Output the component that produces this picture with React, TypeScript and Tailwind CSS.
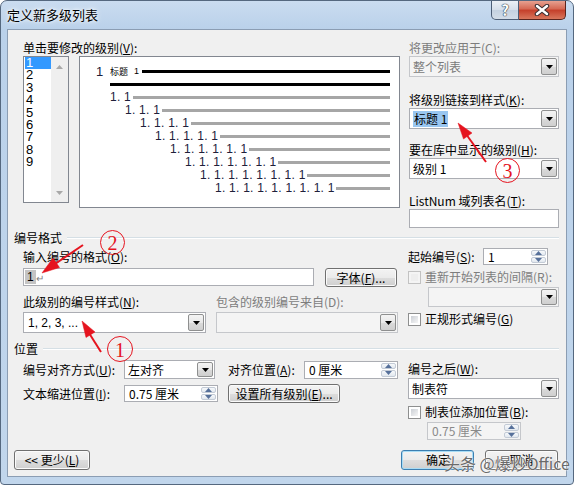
import React from 'react';

type P = { className?: string; children?: React.ReactNode; disabled?: boolean };

function U({ children }: { children: React.ReactNode }) {
  return <span className="underline underline-offset-[1px] decoration-[1px]">{children}</span>;
}

function Tri() {
  return (
    <svg width="7" height="4" viewBox="0 0 7 4">
      <path d="M0 0H7L3.5 4Z" fill="#000" />
    </svg>
  );
}

function DropBtn() {
  return (
    <div className="w-[16px] my-[1px] mr-[1px] flex items-center justify-center border border-[#8e8f8f] rounded-[2px] bg-[linear-gradient(180deg,#f4f4f4,#e8e8e8_50%,#dadada_51%,#cfcfcf)]">
      <Tri />
    </div>
  );
}

function Combo({ className = '', children, disabled }: P) {
  return (
    <div
      className={`flex border ${
        disabled ? 'border-[#c5c7cb] bg-[#f4f4f4] text-[#7a7a7a]' : 'border-[#abadb3] bg-white text-black'
      } ${className}`}
    >
      <div className="flex-1 flex items-center pl-[3px] whitespace-nowrap overflow-hidden text-[12px] leading-[16px]">
        {children}
      </div>
      <DropBtn />
    </div>
  );
}

function SpinArrow({ up }: { up?: boolean }) {
  return (
    <svg width="7" height="4" viewBox="0 0 7 4">
      <path d={up ? 'M0 4H7L3.5 0Z' : 'M0 0H7L3.5 4Z'} fill="#56709a" />
    </svg>
  );
}

function Spin({ className = '', children, disabled }: P) {
  return (
    <div
      className={`flex border ${
        disabled ? 'border-[#c5c7cb] bg-[#f4f4f4] text-[#8a8a8a]' : 'border-[#abadb3] bg-white text-black'
      } ${className}`}
    >
      <div className="flex-1 flex items-center pl-[4px] whitespace-nowrap overflow-hidden text-[12px] leading-[16px]">
        {children}
      </div>
      <div className="w-[15px] flex flex-col my-[1px] mr-[1px] gap-[1px]">
        <div className="flex-1 flex items-center justify-center border border-[#c3cbd6] rounded-[2px] bg-[linear-gradient(180deg,#f7f9fb,#e2e8ef)]">
          <SpinArrow up />
        </div>
        <div className="flex-1 flex items-center justify-center border border-[#c3cbd6] rounded-[2px] bg-[linear-gradient(180deg,#f7f9fb,#e2e8ef)]">
          <SpinArrow />
        </div>
      </div>
    </div>
  );
}

function Btn({ className = '', children, def }: P & { def?: boolean }) {
  return (
    <div
      className={`flex items-center justify-center rounded-[3px] border ${
        def ? 'border-[#3c7fb1] shadow-[inset_0_0_0_1px_#a8dcf5]' : 'border-[#707070] shadow-[inset_0_0_0_1px_#fbfbfb]'
      } bg-[linear-gradient(180deg,#f3f3f3,#ebebeb_50%,#dddddd_51%,#cfcfcf)] text-[12px] leading-[16px] whitespace-nowrap ${className}`}
    >
      {children}
    </div>
  );
}

function Check({ disabled }: { disabled?: boolean }) {
  return (
    <div
      className={`w-[13px] h-[13px] shrink-0 border p-[2px] ${
        disabled ? 'border-[#c2c2c2] bg-[#f4f4f4]' : 'border-[#8e8f8f] bg-white'
      }`}
    >
      <div
        className={`w-full h-full ${
          disabled ? 'bg-[#eeeeee]' : 'bg-[linear-gradient(135deg,#cbcfd5,#f6f6f6)]'
        }`}
      />
    </div>
  );
}

function Label({ className = '', children, disabled }: P) {
  return (
    <div
      className={`h-[16px] text-[12px] leading-[16px] whitespace-nowrap ${
        disabled ? 'text-[#7d7d7d]' : 'text-black'
      } ${className}`}
    >
      {children}
    </div>
  );
}

function ScrollArrow({ up }: { up?: boolean }) {
  return (
    <svg width="7" height="4" viewBox="0 0 7 4">
      <path d={up ? 'M0 4H7L3.5 0Z' : 'M0 0H7L3.5 4Z'} fill="#a8a8a8" />
    </svg>
  );
}

function Circled({ className, n }: { className: string; n: string }) {
  return (
    <div
      className={`absolute rounded-full border-[1.5px] border-[#e5141f] flex items-center justify-center text-[#e5141f] font-['Liberation_Serif',serif] text-[20px] leading-none ${className}`}
    >
      <span className="mt-[1px]">{n}</span>
    </div>
  );
}

export default function App() {
  const levels = [2, 3, 4, 5, 6, 7, 8, 9];
  const items = ['1', '2', '3', '4', '5', '6', '7', '8', '9'];
  return (
    <div className="w-[574px] h-[485px] relative overflow-hidden border border-[#55687f] rounded-t-[7px] rounded-b-[4px] bg-[linear-gradient(180deg,#cadcf0_0px,#bad1ea_28px,#c1d6ec_100%)] font-['Noto_Sans_CJK_SC',sans-serif] text-black text-[12px] leading-[16px]">
      {/* Title bar */}
      <div className="h-[28px] flex items-start">
        <div className="pl-[6px] pt-[5px] text-[13px] leading-[18px] [text-shadow:0_0_6px_#ffffff,0_0_3px_#ffffff]">
          定义新多级列表
        </div>
        <div className="ml-auto mr-[7px] mt-[-1px] flex">
          <div className="w-[28px] h-[20px] border border-[#4c5e76] border-t-0 rounded-bl-[5px] bg-[linear-gradient(180deg,#eef2f7,#d6dfea_50%,#c3d1e0_51%,#d3dde8)] flex items-center justify-center text-[15px] font-bold leading-none text-white [text-shadow:0_0_1px_#2e3a48,0_0_1px_#2e3a48,0_0_1px_#2e3a48]">
            ?
          </div>
          <div className="w-[47px] h-[20px] border border-[#5a241d] border-t-0 border-l-0 rounded-br-[5px] bg-[linear-gradient(180deg,#e9a898,#d66b56_45%,#c5412c_55%,#d8775d)] flex items-center justify-center">
            <svg width="16" height="12" viewBox="0 0 16 12">
              <path d="M3 2L13 10M13 2L3 10" stroke="#3b3033" strokeWidth="4.5" strokeLinecap="round" />
              <path d="M3 2L13 10M13 2L3 10" stroke="#ffffff" strokeWidth="2.4" strokeLinecap="round" />
            </svg>
          </div>
        </div>
      </div>

      {/* Client area */}
      <div className="ml-[6px] w-[560px] h-[448px] border border-[#8b9db3] bg-[#f0f0f0] flex flex-col">
        {/* Top row */}
        <div className="mt-[10px] h-[190px] flex pl-[15px]">
          <div className="w-[377px] flex flex-col">
            <Label>
              单击要修改的级别(<U>V</U>):
            </Label>
            <div className="flex items-start">
              <div className="w-[46px] h-[147px] border border-[#828790] bg-white flex">
                <div className="w-[27px] flex flex-col">
                  {items.map((it, i) => (
                    <div
                      key={it}
                      className={`ml-[1px] w-[26px] h-[12.4px] pl-[1px] text-[13px] leading-[12.4px] font-['Liberation_Sans',sans-serif] ${
                        i === 0 ? 'bg-[#3399ff] text-white' : 'text-black'
                      }`}
                    >
                      {it}
                    </div>
                  ))}
                </div>
                <div className="w-[17px] h-full bg-[#efefef] flex flex-col justify-between items-center pt-[8px] pb-[7px]">
                  <ScrollArrow up />
                  <ScrollArrow />
                </div>
              </div>
              <div className="w-[321px] h-[152px] ml-[10px] border border-[#828790] bg-white pt-[8px] flex flex-col">
                <div className="h-[13px] flex items-center pl-[16px] pr-[9px]">
                  <span className="w-[14px] text-[13px] leading-[13px] font-['Liberation_Sans',sans-serif] text-[#20203a]">
                    1
                  </span>
                  <span className="text-[9px] leading-[13px] text-black">标题</span>
                  <span className="ml-[6px] text-[9px] leading-[13px] font-['Liberation_Sans',sans-serif]">1</span>
                  <div className="flex-1 ml-[3px] h-[3px] bg-black" />
                </div>
                <div className="h-[13px] flex items-center pl-[30px] pr-[9px]">
                  <div className="flex-1 h-[3px] bg-black" />
                </div>
                {levels.map((n) => (
                  <div
                    key={n}
                    className="h-[13px] flex items-center pr-[9px]"
                    style={{ paddingLeft: 30 + (n - 2) * 15 }}
                  >
                    <span
                      className="shrink-0 text-[12px] leading-[13px] tracking-[0.25px] whitespace-nowrap font-['Liberation_Sans',sans-serif] text-[#20203a]"
                      style={{ width: 23 + 14 * (n - 2) }}
                    >
                      {Array(n).fill('1').join('. ')}
                    </span>
                    <div className="flex-1 h-[3px] bg-[#a6a6a6]" />
                  </div>
                ))}
              </div>
            </div>
          </div>
          <div className="ml-[9px] w-[150px] flex flex-col">
            <Label disabled>将更改应用于(C):</Label>
            <Combo disabled className="h-[21px]">
              整个列表
            </Combo>
            <Label className="mt-[15px]">
              将级别链接到样式(<U>K</U>):
            </Label>
            <Combo className="h-[21px]">
              <span className="bg-[#99c6f0] px-[1px]">标题 1</span>
            </Combo>
            <Label className="mt-[13px]">
              要在库中显示的级别(<U>H</U>):
            </Label>
            <Combo className="h-[21px]">级别 1</Combo>
            <Label className="mt-[14px]">
              ListNum 域列表名(<U>T</U>):
            </Label>
            <div className="h-[19px] border border-[#abadb3] bg-white" />
          </div>
        </div>

        {/* 编号格式 header */}
        <div className="h-[16px] flex items-center pl-[6px]">
          <span className="text-[12px] leading-[16px]">编号格式</span>
          <div className="flex-1 ml-[5px] mr-[7px] border-t border-[#d5dfe5] border-b border-b-white" />
        </div>

        {/* 编号格式 body */}
        <div className="h-[95px] flex pl-[15px]">
          <div className="w-[375px] flex flex-col">
            <Label className="mt-[3px]">
              输入编号的格式(<U>O</U>):
            </Label>
            <div className="mt-[3px] flex items-start">
              <div className="w-[291px] h-[18px] border border-[#abadb3] bg-white flex items-stretch pl-[1px] py-[1px]">
                <span className="bg-[#c4c4c4] px-[2px] text-[12px] leading-[14px] font-['Liberation_Sans',sans-serif]">
                  1
                </span>
                <span className="text-[10px] leading-[16px] text-[#808080]">↵</span>
              </div>
              <Btn className="ml-[11px] w-[72px] h-[19px]">
                字体(<U>F</U>)...
              </Btn>
            </div>
            <div className="mt-[7px] flex">
              <Label className="w-[193px]">
                此级别的编号样式(<U>N</U>):
              </Label>
              <Label disabled>包含的级别编号来自(D):</Label>
            </div>
            <div className="mt-[2px] flex">
              <Combo className="w-[183px] h-[21px]">
                <span className="font-['Liberation_Sans',sans-serif] text-[12px] pl-[1px]">1, 2, 3, ...</span>
              </Combo>
              <Combo disabled className="ml-[10px] w-[182px] h-[21px]">
                {''}
              </Combo>
            </div>
          </div>
          <div className="ml-[10px] w-[151px] flex flex-col">
            <div className="mt-[2px] h-[17px] flex items-center">
              <Label className="w-[75px]">
                起始编号(<U>S</U>):
              </Label>
              <Spin className="w-[65px] h-[17px]">1</Spin>
            </div>
            <div className="mt-[5px] h-[14px] flex items-center">
              <Check disabled />
              <Label disabled className="ml-[4px]">
                重新开始列表的间隔(R):
              </Label>
            </div>
            <Combo disabled className="mt-[3px] ml-[20px] w-[131px] h-[20px]">
              {''}
            </Combo>
            <div className="mt-[5px] h-[14px] flex items-center">
              <Check />
              <Label className="ml-[4px]">
                正规形式编号(<U>G</U>)
              </Label>
            </div>
          </div>
        </div>

        {/* 位置 header */}
        <div className="h-[16px] flex items-center pl-[6px]">
          <span className="text-[12px] leading-[16px]">位置</span>
          <div className="flex-1 ml-[5px] mr-[7px] border-t border-[#d5dfe5] border-b border-b-white" />
        </div>

        {/* 位置 body */}
        <div className="h-[93px] flex pl-[15px]">
          <div className="w-[375px] flex flex-col">
            <div className="mt-[3px] h-[19px] flex items-center">
              <Label className="w-[101px]">
                编号对齐方式(<U>U</U>):
              </Label>
              <Combo className="w-[91px] h-[19px]">左对齐</Combo>
              <Label className="ml-[13px] w-[76px]">
                对齐位置(<U>A</U>):
              </Label>
              <Spin className="w-[94px] h-[18px]">0 厘米</Spin>
            </div>
            <div className="mt-[5px] h-[19px] flex items-center">
              <Label className="w-[101px]">
                文本缩进位置(<U>I</U>):
              </Label>
              <Spin className="w-[94px] h-[17px]">0.75 厘米</Spin>
              <Btn className="ml-[10px] w-[112px] h-[19px]">
                设置所有级别(<U>E</U>)...
              </Btn>
            </div>
          </div>
          <div className="ml-[10px] w-[151px] flex flex-col">
            <Label className="mt-[4px]">
              编号之后(<U>W</U>):
            </Label>
            <Combo className="mt-[1px] h-[21px]">制表符</Combo>
            <div className="mt-[6px] h-[14px] flex items-center">
              <Check />
              <Label className="ml-[4px]">
                制表位添加位置(<U>B</U>):
              </Label>
            </div>
            <Spin disabled className="mt-[3px] ml-[19px] w-[94px] h-[18px]">
              0.75 厘米
            </Spin>
          </div>
        </div>

        {/* Bottom buttons */}
        <div className="h-[21px] flex items-start">
          <Btn className="ml-[6px] w-[76px] h-[20px]">
            &lt;&lt; 更少(<U>L</U>)
          </Btn>
          <Btn def className="ml-auto w-[73px] h-[20px] justify-start pl-[24px]">
            确定
          </Btn>
          <Btn className="ml-[11px] mr-[8px] w-[73px] h-[20px]">取消</Btn>
        </div>
      </div>

      {/* Annotations */}
      <svg
        className="absolute left-[-1px] top-[-1px] pointer-events-none"
        width="574"
        height="485"
        viewBox="0 0 574 485"
      >
        <g fill="#e5141f" stroke="#e5141f">
          <line x1="83" y1="245" x2="55" y2="264" strokeWidth="2" />
          <polygon points="42,273 59.5,267.5 53,258" strokeWidth="0.5" />
          <line x1="101" y1="352" x2="89" y2="333" strokeWidth="2" />
          <polygon points="82,321 95,332 86,337.5" strokeWidth="0.5" />
          <line x1="486" y1="162" x2="466" y2="134" strokeWidth="2" />
          <polygon points="458,123 472,133 463.5,139" strokeWidth="0.5" />
        </g>
      </svg>
      <Circled className="left-[99px] top-[229px] w-[25px] h-[25px]" n="2" />
      <Circled className="left-[106px] top-[335px] w-[26px] h-[26px]" n="1" />
      <Circled className="left-[494px] top-[157px] w-[25px] h-[25px]" n="3" />

      {/* Watermark */}
      <div className="absolute left-[443px] top-[452px] text-[16px] leading-[20px] whitespace-nowrap text-[#6a6a6a] [text-shadow:0_0_2px_#ffffff,0_0_1px_#ffffff]">
        头条 @爆炒Office
      </div>
    </div>
  );
}
